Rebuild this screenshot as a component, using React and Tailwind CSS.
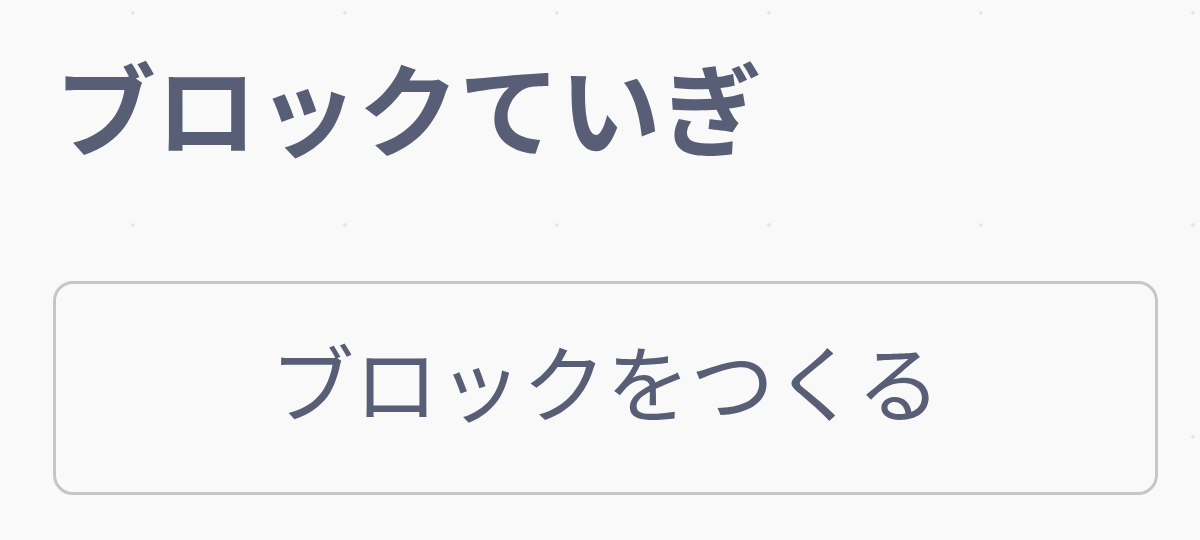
export default function App() {
  return (
    <div
      className="w-[1200px] h-[540px] overflow-hidden bg-[#f9f9f9] bg-[radial-gradient(circle,#e6e6e6_1.5px,transparent_2px)] bg-[length:212px_212px] bg-[position:27px_-93px] flex flex-col"
      style={{ fontFamily: '"Noto Sans CJK JP", "Noto Sans", sans-serif' }}
    >
      <div className="pl-[55px] pt-[55px] h-[101px] box-content text-[101px] leading-[101px] font-bold text-[#575e75]">
        ブロックていぎ
      </div>
      <div className="pl-[53px] pt-[125px]">
        <button className="w-[1105px] h-[214px] border-[3px] border-[#c6c6c6] rounded-[20px] bg-[#f9f9f9] flex items-center justify-center pb-[16px] text-[84px] leading-none text-[#575e75] font-normal">
          ブロックをつくる
        </button>
      </div>
    </div>
  );
}
